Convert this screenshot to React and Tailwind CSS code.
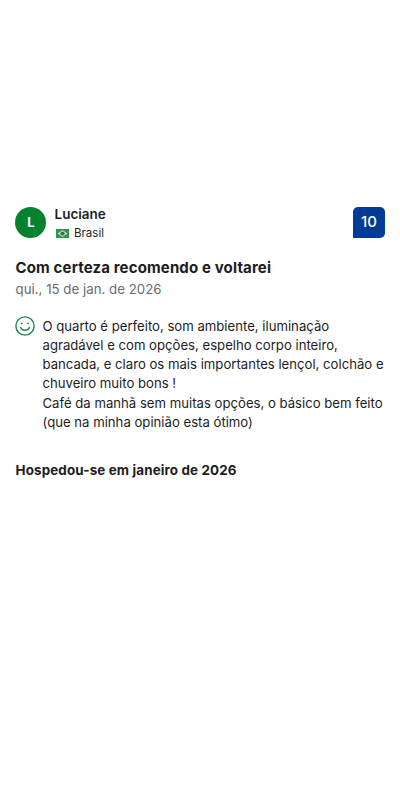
const lines = [
  "O quarto é perfeito, som ambiente, iluminação",
  "agradável e com opções, espelho corpo inteiro,",
  "bancada, e claro os mais importantes lençol, colchão e",
  "chuveiro muito bons !",
  "Café da manhã sem muitas opções, o básico bem feito",
  "(que na minha opinião esta ótimo)",
];

export default function App() {
  return (
    <main className="h-[800px] w-[400px] bg-white pt-[205px] pr-[15px] pl-[15px] font-['Inter',sans-serif] text-[#1d1d1d]">
      <header className="flex h-[36px] items-start justify-between">
        <div className="flex">
          <div className="mt-[2px] flex size-[31px] items-center justify-center rounded-full bg-[#058230] pl-px text-[13px] font-bold text-white">L</div>
          <div className="ml-[8px]">
            <h1 className="h-[19px] pl-[0.5px] text-[13.5px] leading-[18px] font-semibold">Luciane</h1>
            <div className="flex h-[18px] items-center text-[11.5px] leading-[18px]">
              <svg className="mr-[5px] ml-[2px]" width="13" height="9" viewBox="0 0 13 9">
                <rect width="13" height="9" fill="#2c9650" />
                <path d="M6.5 1 11.5 4.5 6.5 8 1.5 4.5Z" fill="#c5dc9c" />
                <circle cx="6.5" cy="4.5" r="2.1" fill="#326f68" />
              </svg>
              Brasil
            </div>
          </div>
        </div>
        <div className="mt-[2px] flex h-[31px] w-[32px] items-center justify-center rounded-[5px] rounded-bl-none bg-[#003b95] text-[15px] font-medium text-white">10</div>
      </header>
      <h2 className="mt-[16px] pl-[0.5px] text-[15px] leading-[22px] font-bold tracking-[0.14px]">Com certeza recomendo e voltarei</h2>
      <p className="pl-[0.5px] text-[13.3px] leading-[21px] text-[#6b6b6b]">qui., 15 de jan. de 2026</p>
      <section className="mt-[16px] flex">
        <svg className="shrink-0" width="20" height="20" viewBox="0 0 20 20" fill="none" stroke="#238550" strokeWidth="1.4" strokeLinecap="round">
          <circle cx="10" cy="10" r="9.1" />
          <path d="M5.7 11.5c1.3 3.7 7.3 3.7 8.6 0" />
          <circle cx="6.9" cy="7.3" r=".9" fill="#238550" stroke="none" />
          <circle cx="13.1" cy="7.3" r=".9" fill="#238550" stroke="none" />
        </svg>
        <div className="ml-[7.5px] pt-[0.5px] text-[13.15px] leading-[19.3px] whitespace-nowrap">
          {lines.map((text) => <p key={text}>{text}</p>)}
        </div>
      </section>
      <p className="mt-[28px] pl-[0.5px] text-[13.4px] leading-[20px] font-bold tracking-[0.14px]">Hospedou-se em janeiro de 2026</p>
    </main>
  );
}
